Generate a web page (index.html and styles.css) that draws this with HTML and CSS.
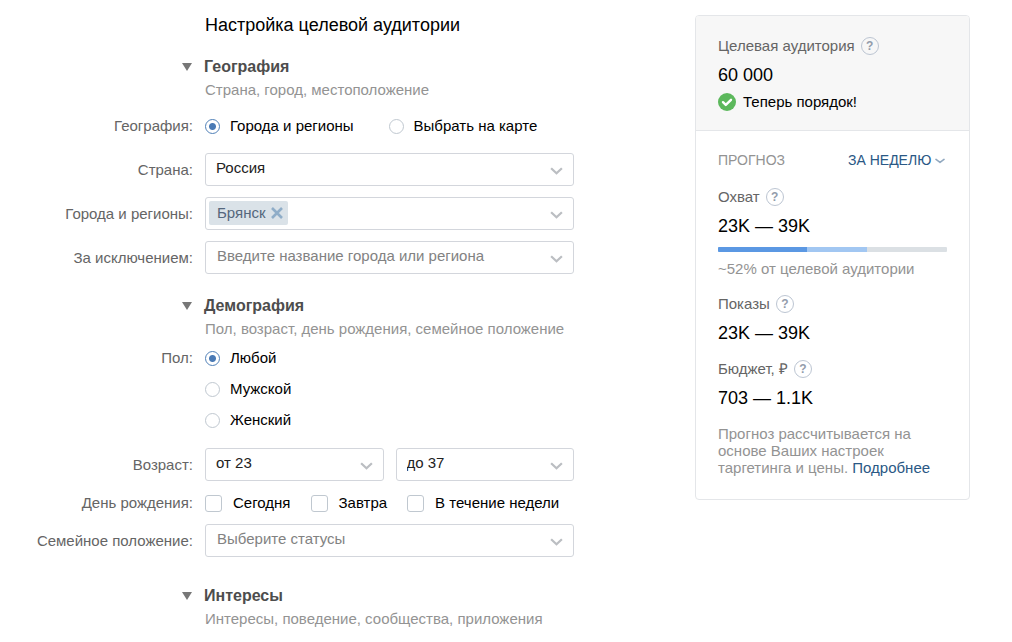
FILE: index.html
```html
<!DOCTYPE html>
<html lang="ru">
<head>
<meta charset="utf-8">
<meta name="viewport" content="width=device-width, initial-scale=1">
<title>Настройка целевой аудитории</title>
<link rel="stylesheet" href="styles.css">
</head>
<body>
<svg class="sprite" aria-hidden="true">
  <symbol id="chevron" viewBox="0 0 14 8"><path d="M1.2 1L7 6.4 12.8 1" fill="none" stroke="currentColor" stroke-width="2.4"/></symbol>
</svg>
<div class="page">
  <form class="form">
    <h1 class="title">Настройка целевой аудитории</h1>

    <section class="section">
      <h2 class="heading"><button class="toggle" type="button" aria-expanded="true"><span class="triangle"></span>География</button></h2>
      <p class="hint">Страна, город, местоположение</p>
      <div class="row row-spaced" role="radiogroup" aria-labelledby="geo-label">
        <span class="label" id="geo-label">География:</span>
        <div class="choices choices-wide">
          <label class="choice"><input class="radio" type="radio" name="geo" checked>Города и регионы</label>
          <label class="choice"><input class="radio" type="radio" name="geo">Выбрать на карте</label>
        </div>
      </div>
      <div class="row row-field row-first">
        <label class="label" for="country">Страна:</label>
        <div class="field">
          <select class="control" id="country"><option>Россия</option></select>
          <svg class="arrow"><use href="#chevron"/></svg>
        </div>
      </div>
      <div class="row row-field">
        <label class="label" for="cities">Города и регионы:</label>
        <div class="field">
          <div class="tags">
            <span class="tag">Брянск<button class="tag-remove" type="button" aria-label="Удалить Брянск"><svg class="cross" viewBox="0 0 12 12"><path d="M1 1l10 10M11 1L1 11" fill="none" stroke="currentColor" stroke-width="2.6"/></svg></button></span>
            <input class="tag-input" id="cities" type="text">
          </div>
          <svg class="arrow"><use href="#chevron"/></svg>
        </div>
      </div>
      <div class="row row-field">
        <label class="label" for="except">За исключением:</label>
        <div class="field">
          <input class="control control-text" id="except" type="text" placeholder="Введите название города или региона">
          <svg class="arrow"><use href="#chevron"/></svg>
        </div>
      </div>
    </section>

    <section class="section">
      <h2 class="heading"><button class="toggle" type="button" aria-expanded="true"><span class="triangle"></span>Демография</button></h2>
      <p class="hint">Пол, возраст, день рождения, семейное положение</p>
      <div class="row row-sex" role="radiogroup" aria-labelledby="sex-label">
        <span class="label" id="sex-label">Пол:</span>
        <div class="choices choices-column">
          <label class="choice"><input class="radio" type="radio" name="sex" checked>Любой</label>
          <label class="choice"><input class="radio" type="radio" name="sex">Мужской</label>
          <label class="choice"><input class="radio" type="radio" name="sex">Женский</label>
        </div>
      </div>
      <div class="row row-field row-first">
        <label class="label" for="age-from">Возраст:</label>
        <div class="pair">
          <div class="field">
            <select class="control" id="age-from"><option>от 23</option></select>
            <svg class="arrow"><use href="#chevron"/></svg>
          </div>
          <div class="field">
            <select class="control" id="age-to" aria-label="Возраст до"><option>до 37</option></select>
            <svg class="arrow"><use href="#chevron"/></svg>
          </div>
        </div>
      </div>
      <div class="row row-birthday" role="group" aria-labelledby="birthday-label">
        <span class="label" id="birthday-label">День рождения:</span>
        <div class="choices choices-checks">
          <label class="choice"><input class="check" type="checkbox">Сегодня</label>
          <label class="choice"><input class="check" type="checkbox">Завтра</label>
          <label class="choice"><input class="check" type="checkbox">В течение недели</label>
        </div>
      </div>
      <div class="row row-field row-status">
        <label class="label" for="status">Семейное положение:</label>
        <div class="field">
          <input class="control control-text" id="status" type="text" placeholder="Выберите статусы">
          <svg class="arrow"><use href="#chevron"/></svg>
        </div>
      </div>
    </section>

    <section class="section section-interests">
      <h2 class="heading"><button class="toggle" type="button" aria-expanded="true"><span class="triangle"></span>Интересы</button></h2>
      <p class="hint">Интересы, поведение, сообщества, приложения</p>
    </section>
  </form>

  <aside class="card">
    <div class="card-head">
      <div class="metric-name">Целевая аудитория<button class="help" type="button" aria-label="Подсказка: целевая аудитория">?</button></div>
      <div class="metric-value">60 000</div>
      <div class="verdict">
        <svg class="ok" viewBox="0 0 18 18"><circle cx="9" cy="9" r="9" fill="#5cb85c"/><path d="M5 9.2l2.8 2.7L13 6.8" fill="none" stroke="#fff" stroke-width="2.4" stroke-linecap="round" stroke-linejoin="round"/></svg>
        Теперь порядок!
      </div>
    </div>
    <div class="card-body">
      <div class="forecast">
        <label class="forecast-name" for="period">ПРОГНОЗ</label>
        <div class="period">
          <select class="period-select" id="period"><option>ЗА НЕДЕЛЮ</option></select>
          <svg class="period-arrow" viewBox="0 0 10 6"><path d="M1 1.4L5 4.4 9 1.4" fill="none" stroke="currentColor" stroke-width="1.6" stroke-linecap="round" stroke-linejoin="round"/></svg>
        </div>
      </div>
      <div class="metric metric-reach">
        <div class="metric-name">Охват<button class="help" type="button" aria-label="Подсказка: охват">?</button></div>
        <div class="metric-value">23K — 39K</div>
        <div class="bar"><span class="bar-low" style="width:39%"></span><span class="bar-high" style="width:26%"></span></div>
        <div class="share">~52% от целевой аудитории</div>
      </div>
      <div class="metric">
        <div class="metric-name">Показы<button class="help" type="button" aria-label="Подсказка: показы">?</button></div>
        <div class="metric-value">23K — 39K</div>
      </div>
      <div class="metric metric-budget">
        <div class="metric-name">Бюджет, ₽<button class="help" type="button" aria-label="Подсказка: бюджет">?</button></div>
        <div class="metric-value">703 — 1.1K</div>
      </div>
      <p class="note">Прогноз рассчитывается на основе Ваших настроек таргетинга и цены. <a class="link" href="#">Подробнее</a></p>
    </div>
  </aside>
</div>
</body>
</html>
```
FILE: styles.css
```css
* { box-sizing: border-box; }
body {
  margin: 0;
  background: #fff;
  color: #000;
  font: 15px/20px "Liberation Sans", Arial, sans-serif;
}
button, input, select { font: inherit; color: inherit; margin: 0; }
button { padding: 0; border: 0; background: none; cursor: pointer; }
.sprite { display: none; }

.page {
  display: flex;
  justify-content: space-between;
  align-items: flex-start;
  gap: 24px;
  padding: 15px 42px 0 0;
}
.form { flex: 1; max-width: 574px; }
.title { margin: 0 0 20px 205px; font-size: 18px; font-weight: 400; line-height: 20px; }
.section { margin-bottom: 20px; }
.section-interests { margin: 27px 0 0; padding-bottom: 10px; }
.heading { margin: 0; padding-left: 182px; font-size: 16px; line-height: 24px; }
.toggle { display: flex; align-items: center; gap: 12px; font-weight: 700; color: #4d4d4d; }
.triangle { border: 5px solid transparent; border-top: 8px solid #777; border-bottom: 0; }
.hint { margin: 0 0 0 205px; padding-bottom: 1px; line-height: 22px; color: #939393; }

.row { display: grid; grid-template-columns: 193px minmax(0, 1fr); column-gap: 12px; }
.label { text-align: right; line-height: 24px; color: #656565; }
.row-spaced { margin-top: 12px; }
.row-sex { margin-top: 5px; padding-bottom: 1px; }
.row-field { margin-top: 11px; align-items: center; }
.row-first { margin-top: 15px; }
.row-birthday { margin-top: 10px; }
.row-status { margin-top: 9px; }

.choices { display: flex; }
.choices-wide { gap: 35px; }
.choices-checks { gap: 20px; }
.choices-column { flex-direction: column; align-items: flex-start; gap: 7px; }
.choice { display: flex; align-items: center; line-height: 24px; white-space: nowrap; }
.radio {
  appearance: none;
  width: 15px;
  height: 15px;
  margin-right: 10px;
  border: 1px solid #c0c8d0;
  border-radius: 50%;
  background: #fff;
}
.radio:checked { border-color: #5181b8; background: radial-gradient(circle, #4a7ab5 3px, #fff 4px); }
.check {
  appearance: none;
  width: 17px;
  height: 17px;
  margin-right: 11px;
  border: 1px solid #c0c8d0;
  border-radius: 3px;
  background: #fff;
}

.field { position: relative; min-width: 0; }
.control, .tags {
  display: block;
  width: 100%;
  height: 33px;
  border: 1px solid #d3d6dc;
  border-radius: 3px;
  background: #fff;
}
.control { appearance: none; padding: 0 34px 3px 10px; color: #222; }
.control-text { padding: 0 34px 5px 11px; }
.control::placeholder { color: #828282; opacity: 1; }
.arrow { position: absolute; top: 14px; right: 11px; width: 13px; height: 8px; color: #bbbec2; pointer-events: none; }
.pair { display: grid; grid-template-columns: 1fr 1fr; gap: 12px; }
.tags { display: flex; padding: 3px 34px 4px 3px; }
.tag {
  display: flex;
  align-items: center;
  gap: 5px;
  height: 24px;
  padding: 0 5px 0 8px;
  border-radius: 2px;
  background: #dae2e8;
  color: #55677d;
}
.tag-remove { display: flex; color: #8fadc8; }
.cross { width: 12px; height: 12px; }
.tag-input { flex: 1; min-width: 0; padding: 0 4px; border: 0; background: none; }

.card { flex: none; width: 275px; border: 1px solid #e4e6e9; border-radius: 4px; overflow: hidden; }
.card-head { padding: 20px 22px 18px; border-bottom: 1px solid #e4e6e9; background: #f7f7f7; }
.card-body { padding: 19px 22px 23px; }
.metric-name { display: flex; align-items: center; gap: 6px; color: #656565; }
.metric-value { margin-top: 7px; font-size: 18px; line-height: 24px; }
.help {
  width: 18px;
  height: 18px;
  border: 1px solid #bcc5d2;
  border-radius: 50%;
  color: #939cab;
  font-size: 12px;
  font-weight: 700;
  line-height: 16px;
}
.verdict { display: flex; align-items: center; gap: 7px; margin-top: 5px; }
.ok { width: 18px; height: 18px; }
.forecast { display: flex; justify-content: space-between; font-size: 14px; color: #939393; }
.period { position: relative; display: flex; color: #2a5885; }
.period-select { appearance: none; width: 99px; padding: 0; border: 0; background: none; }
.period-arrow { position: absolute; top: 8px; right: 2px; width: 10px; height: 6px; color: #92a9c0; pointer-events: none; }
.metric { margin-top: 15px; }
.metric-reach { margin-top: 17px; }
.metric-budget { margin-top: 14px; }
.bar { display: flex; height: 5px; margin-top: 9px; border-radius: 1px; background: #dbe0e4; overflow: hidden; }
.bar-low { background: #5b98e3; }
.bar-high { background: #a2c7f2; }
.share { margin-top: 7px; color: #939393; }
.note { margin: 15px 0 0; line-height: 17px; color: #939393; }
.link { color: #2a5885; text-decoration: none; }
```
